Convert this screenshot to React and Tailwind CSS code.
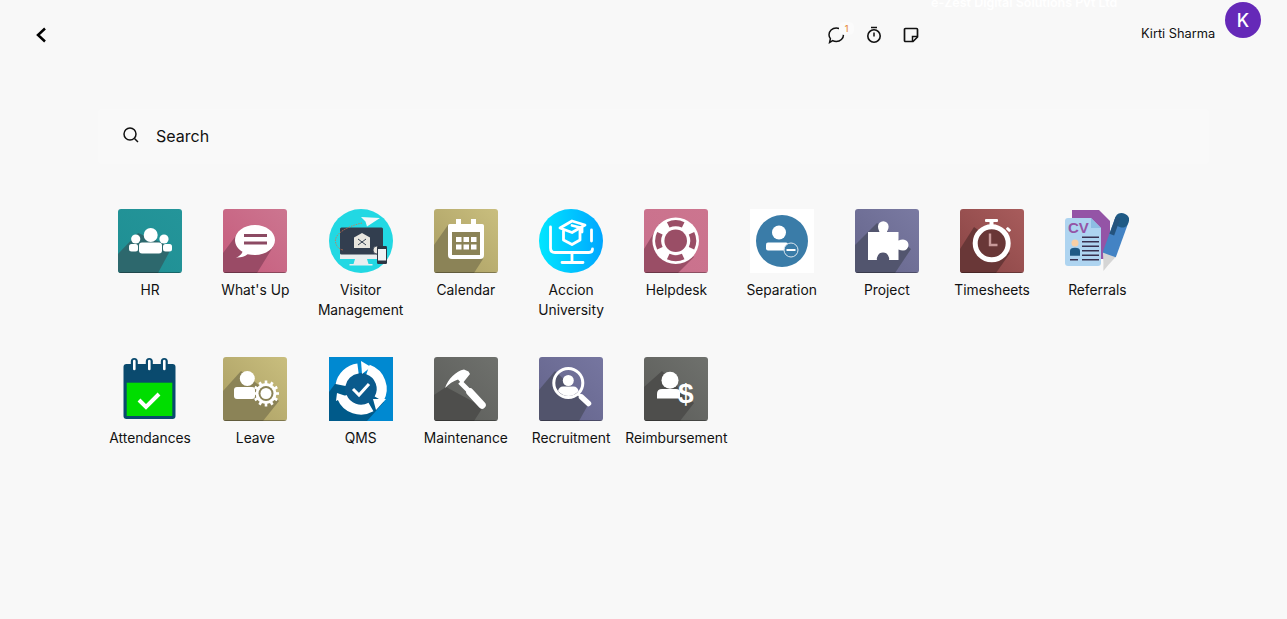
import React from "react";

function Tile({ id, from, to, shadow, shadowPts, children }) {
  return (
    <svg width="64" height="64" viewBox="0 0 64 64" className="block">
      <defs>
        <linearGradient id={id} x1="0" y1="1" x2="1" y2="0">
          <stop offset="0" stopColor={from} />
          <stop offset="1" stopColor={to} />
        </linearGradient>
        <clipPath id={id + "c"}>
          <rect width="64" height="64" rx="3" />
        </clipPath>
      </defs>
      <g clipPath={`url(#${id}c)`}>
        <rect width="64" height="64" fill={`url(#${id})`} />
        <polygon points={shadowPts} fill={shadow} />
        <rect y="63" width="64" height="1" fill="#000" opacity="0.3" />
      </g>
      {children}
    </svg>
  );
}

const HR = () => (
  <Tile id="hr" from="#1f8f93" to="#24959a" shadow="#2d686d" shadowPts="0,45 20,24 54,38 40,64 0,64">
    <g fill="#fff">
      <circle cx="32.7" cy="26" r="7" />
      <circle cx="17.7" cy="30" r="4.6" />
      <circle cx="46" cy="30" r="4.6" />
      <rect x="21" y="33.5" width="23" height="11" rx="3" />
      <rect x="11" y="35" width="9" height="7.5" rx="2.5" />
      <rect x="45" y="35" width="9" height="7.5" rx="2.5" />
    </g>
  </Tile>
);

const WhatsUp = () => (
  <Tile id="wu" from="#c65b7c" to="#cc7690" shadow="#9a4b66" shadowPts="0,44 15,24 50,38 34,64 0,64">
    <path d="M32 16c-11 0-20 6.700-20 15 0 5 3 9 7.500 11.700-.8 2.300-3 4.800-6.500 5.800 4.500.3 8.500-.8 11.500-3.200 2.400.5 4.900.7 7.500.7 11 0 20-6.700 20-15s-9-15-20-15z" fill="#fff" />
    <rect x="21" y="25" width="23" height="3" fill="#8c4a63" />
    <rect x="21" y="32.500" width="23" height="3" fill="#8c4a63" />
  </Tile>
);

const Visitor = () => (
  <svg width="64" height="64" viewBox="0 0 64 64" className="block">
    <circle cx="32" cy="32" r="32" fill="#22d8e3" />
    <path d="M11 45 L54 45 L54 50 L11 50Z" fill="#e9eef0" />
    <path d="M26 50h12l1.500 5h4v1.500h-23V55h4z" fill="#e9eef0" />
    <rect x="11" y="18.500" width="43" height="27" rx="1.500" fill="#323e4f" />
    <path d="M25 28.500 L33 24 L41 28.500 V39 H25Z" fill="#e8e6df" />
    <path d="M29 30l4 3 4-3M29 36l4-3 4 3" stroke="#323e4f" strokeWidth="1" fill="none" />
    <path d="M33 14 C20 17 5 24 6.500 33 C7.500 38 10 40 14 41" stroke="#d8744a" strokeWidth="0.8" strokeDasharray="1.500 1" fill="none" />
    <path d="M32 8 L51 9 L38 17.500 L36.500 12.500Z" fill="#f4f7f8" />
    <circle cx="48" cy="41" r="4" fill="#e8e6df" stroke="#323e4f" strokeWidth="0.8" />
    <rect x="48" y="37" width="10" height="18" rx="1.200" fill="#2c3644" />
    <rect x="49" y="40" width="8" height="11.500" fill="#eef2f4" />
  </svg>
);

const Calendar = () => (
  <Tile id="cal" from="#a99d62" to="#c9be7e" shadow="#8b8357" shadowPts="0,36 14,16 49,50 40,64 0,64">
    <rect x="22" y="10" width="5" height="8" fill="#fff" />
    <rect x="37" y="10" width="5" height="8" fill="#fff" />
    <rect x="16" y="17" width="32" height="31" rx="2" fill="#8b8357" stroke="#fff" strokeWidth="4" />
    <rect x="14" y="15" width="36" height="8" rx="2" fill="#fff" />
    <g fill="#fff">
      <rect x="22" y="28" width="5.500" height="5" />
      <rect x="29.500" y="28" width="5.500" height="5" />
      <rect x="37" y="28" width="5.500" height="5" />
      <rect x="22" y="35.500" width="5.500" height="5" />
      <rect x="29.500" y="35.500" width="5.500" height="5" />
      <rect x="37" y="35.500" width="5.500" height="5" />
    </g>
  </Tile>
);

const Accion = () => (
  <svg width="64" height="64" viewBox="0 0 64 64" className="block">
    <defs>
      <linearGradient id="ac" x1="0" y1="0" x2="1" y2="0">
        <stop offset="0" stopColor="#00e6ff" />
        <stop offset="1" stopColor="#00a6ff" />
      </linearGradient>
    </defs>
    <circle cx="32" cy="32" r="32" fill="url(#ac)" />
    <g stroke="#fff" strokeWidth="2.800" fill="none" strokeLinecap="round" strokeLinejoin="round">
      <path d="M11.500 18V39q0 4.500 4.500 4.500H50q3.500 0 3.500-3.500" />
      <path d="M52.500 21V32" />
      <path d="M33 44V53M23 53.500H44" />
      <path d="M21 19L33 12 46 16 33 23.500Z" />
      <path d="M24.500 22V31L33 35.500 41 31V21" />
      <path d="M33 16.500L43 19V23" />
    </g>
  </svg>
);

const Helpdesk = () => (
  <Tile id="hd" from="#c9708c" to="#cc758f" shadow="#9a4e66" shadowPts="0,40 16,14 50,48 34,64 0,64">
    <circle cx="31.700" cy="31.700" r="23.300" fill="#fff" />
    <circle cx="31.700" cy="31.700" r="11.300" fill="#9a4e66" />
    <g fill="none" stroke="#9a4e66" strokeWidth="6">
      <path d="M24.200 15.900A17.500 17.500 0 0 1 39.200 15.900" />
      <path d="M47.500 24.200A17.500 17.500 0 0 1 47.500 39.200" />
      <path d="M39.200 47.500A17.500 17.500 0 0 1 24.200 47.500" />
      <path d="M15.900 39.200A17.500 17.500 0 0 1 15.900 24.200" />
    </g>
  </Tile>
);

const Separation = () => (
  <svg width="64" height="64" viewBox="0 0 64 64" className="block">
    <rect width="64" height="64" fill="#fff" />
    <circle cx="32" cy="32" r="26" fill="#3a7ca8" />
    <ellipse cx="29" cy="23.500" rx="7" ry="7" fill="#fff" />
    <rect x="16" y="33.500" width="22" height="8" rx="2" fill="#fff" />
    <circle cx="41" cy="41" r="7" fill="#3a7ca8" stroke="#dbe6ee" strokeWidth="1" />
    <rect x="36.500" y="40" width="9" height="2" fill="#fff" />
  </svg>
);

const ProjectIcon = () => (
  <Tile id="pr" from="#65658b" to="#7a7aa2" shadow="#52556e" shadowPts="0,36 22,14 56,40 40,64 0,64">
    <path
      d="M13 23H24.500C24 21 23 20 23 17.500A5.300 5.300 0 0 1 33.600 17.500C33.600 20 32.500 21 32 23H43.500V31.500C45 30.800 46.500 30.500 48 30.500A5.500 5.500 0 0 1 48 41.500C46.500 41.500 45 41.200 43.500 40.500V51H34C34.500 49.500 34 48.500 33.500 47.500A5.800 5.800 0 0 0 22.500 47.500C22 48.500 21.500 49.500 22 51H13Z"
      fill="#fff"
    />
  </Tile>
);

const Timesheets = () => (
  <Tile id="ts" from="#884444" to="#a85c5c" shadow="#693737" shadowPts="0,40 14,18 50,44 36,64 0,64">
    <rect x="25" y="10" width="13" height="3" rx="1" fill="#fff" />
    <rect x="29.500" y="12" width="4" height="5" fill="#fff" />
    <rect x="46" y="19" width="5" height="3" rx="1" transform="rotate(45 48.500 20.500)" fill="#fff" />
    <circle cx="31.700" cy="34.300" r="16.500" fill="#693737" stroke="#fff" strokeWidth="5" />
    <path d="M30 24.500V36H37.500" stroke="#c89a9a" strokeWidth="2.400" fill="none" />
  </Tile>
);

const Referrals = () => (
  <svg width="64" height="64" viewBox="0 0 64 64" className="block">
    <path d="M7 1H34L45 12V50H7Z" fill="#9454a6" />
    <path d="M0 12q0-3 3-3H26L36 19V54q0 3-3 3H3q-3 0-3-3Z" fill="#aed4f0" />
    <path d="M26 9L36 19H26Z" fill="#8dbde3" />
    <text x="3" y="24" fontFamily="'Liberation Sans',sans-serif" fontWeight="700" fontSize="15" fill="#9454a6">CV</text>
    <circle cx="10" cy="34" r="3.500" fill="#f7cfa5" />
    <path d="M5 46.700v-5q0-3 5-3t5 3v5Z" fill="#1f5a85" />
    <g fill="#38304f">
      <rect x="17" y="27.500" width="17" height="1.500" />
      <rect x="17" y="32" width="17" height="1.500" />
      <rect x="17" y="36.500" width="17" height="1.500" />
      <rect x="17" y="41" width="17" height="1.500" />
      <rect x="17" y="45.500" width="17" height="1.500" />
      <rect x="5" y="50" width="8" height="1.500" />
      <rect x="17" y="50" width="17" height="1.500" />
    </g>
    <g transform="rotate(20 50 30)">
      <path d="M43 46 L57 46 L52.500 57 L50 64 L47.500 57Z" fill="#d5d5d5" />
      <rect x="43" y="10" width="14" height="37" fill="#4383c4" />
      <rect x="43" y="3" width="14" height="14" rx="6" fill="#1f5a85" />
      <rect x="43" y="9" width="5" height="18" fill="#24537d" />
    </g>
  </svg>
);

const Attendances = () => (
  <svg width="64" height="64" viewBox="0 0 64 64" className="block">
    <rect x="5.500" y="7" width="52" height="55" rx="3" fill="#0a4a6e" />
    <rect x="8.700" y="25.700" width="45.600" height="33.300" fill="#00dd00" />
    <g fill="none" strokeLinecap="round">
      {[16.300, 31.300, 46.300].map((x) => (
        <g key={x}>
          <path d={`M${x} 4.500V12.500`} stroke="#0a4a6e" strokeWidth="7" />
          <path d={`M${x} 4V12`} stroke="#fff" strokeWidth="2.600" />
        </g>
      ))}
    </g>
    <path d="M21 43L28 50 41 37" fill="none" stroke="#fff" strokeWidth="4" />
  </svg>
);

const gearTeeth = [0, 30, 60, 90, 120, 150];

const Leave = () => (
  <Tile id="lv" from="#a99d62" to="#c9be7e" shadow="#8b8357" shadowPts="0,34 18,14 56,44 40,64 0,64">
    <circle cx="24.300" cy="21.500" r="7.500" fill="#fff" />
    <rect x="11" y="30" width="21" height="12" rx="3" fill="#fff" />
    <g fill="#fff">
      {gearTeeth.map((a) => (
        <rect key={a} x="41.700" y="23.500" width="2.600" height="26" transform={`rotate(${a} 43 36.500)`} />
      ))}
    </g>
    <circle cx="43" cy="36.500" r="10.500" fill="#fff" />
    <circle cx="43" cy="36.500" r="7.500" fill="#8b8357" />
    <circle cx="43" cy="36.500" r="5.500" fill="#fff" />
  </Tile>
);

const QMS = () => (
  <svg width="64" height="64" viewBox="0 0 64 64" className="block">
    <rect width="64" height="64" fill="#0089d1" />
    <polygon points="0,35 14,16 55,45 38,64 0,64" fill="#005a8a" />
    <circle cx="32" cy="32" r="16" fill="#0a5a8c" />
    <g fill="none" stroke="#fff" strokeWidth="10">
      <path d="M11.500 28A20.500 20.500 0 0 1 29 11.500" />
      <path d="M39 12.500A20.500 20.500 0 0 1 50 42" />
      <path d="M42 50A20.500 20.500 0 0 1 13 40" />
    </g>
    <g fill="#fff">
      <polygon points="32,4 42,10 33,17" />
      <polygon points="44,42 57,42 47,53" />
      <polygon points="8,36 17,39 7,44" />
    </g>
    <path d="M24 32L30 38 40 27" fill="none" stroke="#fff" strokeWidth="3" />
  </svg>
);

const Maintenance = () => (
  <Tile id="mt" from="#5b5c59" to="#6f716d" shadow="#4e4e4c" shadowPts="0,38 12,30 49,50 40,64 0,64">
    <path d="M11 31C14 22 22 14 30 12.500L34.500 14.500 36 17 28 27 24 22.500C19 24 15 27 11 31Z" fill="#fff" />
    <path d="M26 25L36 35" stroke="#fff" strokeWidth="5" />
    <path d="M36 35L48 48" stroke="#fff" strokeWidth="7.500" strokeLinecap="round" />
  </Tile>
);

const Recruitment = () => (
  <Tile id="rc" from="#63638a" to="#7676a0" shadow="#52546c" shadowPts="0,33 16,14 50,46 40,64 0,64">
    <circle cx="29.300" cy="26" r="14.500" fill="none" stroke="#fff" strokeWidth="3" />
    <circle cx="29.300" cy="23.500" r="5.500" fill="#fff" />
    <path d="M19 34q1-4.500 5-4.500h10.500q4 0 5 4.500-4 5-10 5t-10.500-5z" fill="#fff" />
    <path d="M39.500 37L42 39.500" stroke="#fff" strokeWidth="3" />
    <path d="M42.500 40L49.500 46.500" stroke="#fff" strokeWidth="5.500" strokeLinecap="round" />
  </Tile>
);

const Reimbursement = () => (
  <Tile id="rb" from="#5b5c59" to="#6f716d" shadow="#4e4e4c" shadowPts="0,30 18,14 50,46 36,64 0,64">
    <circle cx="26" cy="23.300" r="8.500" fill="#fff" />
    <path d="M13 41.500V37q0-5 5-5h14q4 0 4 3v6.500Z" fill="#fff" />
    <text x="34" y="46" fontFamily="'Liberation Sans',sans-serif" fontWeight="700" fontSize="28" fill="#fff">$</text>
  </Tile>
);

const apps = [
  ["HR", HR],
  ["What's Up", WhatsUp],
  ["Visitor Management", Visitor],
  ["Calendar", Calendar],
  ["Accion University", Accion],
  ["Helpdesk", Helpdesk],
  ["Separation", Separation],
  ["Project", ProjectIcon],
  ["Timesheets", Timesheets],
  ["Referrals", Referrals],
  ["Attendances", Attendances],
  ["Leave", Leave],
  ["QMS", QMS],
  ["Maintenance", Maintenance],
  ["Recruitment", Recruitment],
  ["Reimbursement", Reimbursement],
];

export default function App() {
  return (
    <div className="h-[619px] overflow-hidden bg-[#f8f8f8] font-['Inter',sans-serif] text-black">
      <header className="relative flex h-[70px] items-start overflow-hidden">
        <span className="absolute left-[931px] top-[-7px] whitespace-nowrap text-[12.500px] font-semibold leading-[20px] text-white">
          e-Zest Digital Solutions Pvt Ltd
        </span>
        <svg width="12" height="16" viewBox="0 0 12 16" className="ml-[35px] mt-[27px]">
          <path d="M10 1.500L3 8l7 6.500" fill="none" stroke="#000" strokeWidth="2.500" />
        </svg>
        <div className="ml-[780px] mt-[26px] flex items-start">
          <div className="relative h-[18px] w-[18px]">
            <svg width="18" height="18" viewBox="0 0 18 18">
              <path
                d="M2.600 16.400l.8-3.800C2.500 11.400 2 10.100 2 8.700 2 5 5.100 2 9.300 2s7.200 2.900 7.200 6.700-3.200 6.800-7.200 6.800c-1.300 0-2.600-.3-3.600-.9z"
                fill="none"
                stroke="#111"
                strokeWidth="1.500"
              />
            </svg>
            <span className="absolute left-[12px] top-[-4px] flex h-[13px] w-[15px] items-center justify-center rounded-[5px] bg-[#fbfbfb] text-[9px] font-medium leading-none text-[#e8914a]">
              1
            </span>
          </div>
          <svg width="16" height="18" viewBox="0 0 16 18" className="ml-[21px]">
            <path d="M5 1.500h6" stroke="#111" strokeWidth="1.500" />
            <circle cx="8" cy="10" r="6.200" fill="none" stroke="#111" strokeWidth="1.600" />
            <path d="M8 6.500V10.500" stroke="#111" strokeWidth="1.500" />
          </svg>
          <svg width="16" height="16" viewBox="0 0 16 16" className="ml-[21px] mt-[1px]">
            <path
              d="M2.500 1.500h11q1 0 1 1V10L10 14.500H2.500q-1 0-1-1V2.500q0-1 1-1z"
              fill="none"
              stroke="#111"
              strokeWidth="1.700"
            />
            <path d="M14 9.500H9.500V14" fill="none" stroke="#111" strokeWidth="1.500" />
          </svg>
        </div>
        <span className="ml-[222px] mt-[25px] whitespace-nowrap text-[12.800px] leading-[18px] text-[#111]">Kirti Sharma</span>
        <div className="ml-auto mr-[26px] mt-[2px] flex h-[36px] w-[36px] items-center justify-center rounded-full bg-[#6529b8] text-[18px] font-medium text-white">
          K
        </div>
      </header>

      <main className="ml-[97.500px] mt-[39px]">
        <div className="flex h-[55px] w-[1111px] items-center rounded-[4px] bg-[#f9f9f9] pl-[24px]">
          <svg width="18" height="18" viewBox="0 0 18 18" className="mt-[-3px]">
            <circle cx="8" cy="8" r="6" fill="none" stroke="#111" strokeWidth="1.500" />
            <path d="M12.500 12.500L16 16" stroke="#111" strokeWidth="1.500" />
          </svg>
          <span className="ml-[16.500px] mt-[-1px] text-[16px] leading-[20px] text-[#111]">Search</span>
        </div>
        <div className="mt-[45px] grid grid-cols-[repeat(10,105.250px)] grid-rows-[148px_148px]">
          {apps.map(([name, Icon]) => (
            <div key={name} className="flex flex-col items-center">
              <Icon />
              <div className="mt-[7px] w-[105px] text-center text-[13.800px] leading-[20px] text-[#111]">
                {name}
              </div>
            </div>
          ))}
        </div>
      </main>
    </div>
  );
}
